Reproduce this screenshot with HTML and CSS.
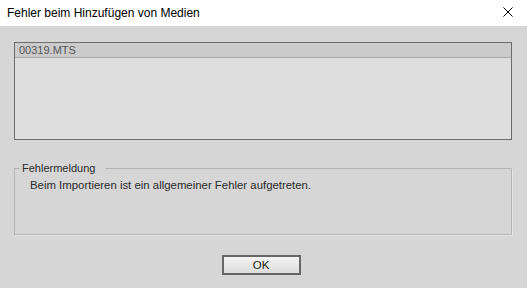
FILE: index.html
```html
<!DOCTYPE html>
<html lang="de">
<head>
  <meta charset="UTF-8">
  <title>Fehler beim Hinzufügen von Medien</title>
  <link rel="stylesheet" href="styles.css">
</head>
<body>
  <div class="titlebar">
    <span class="title">Fehler beim Hinzufügen von Medien</span>
    <svg class="close" width="10" height="10" viewBox="0 0 10 10">
      <path d="M0.5 0.5 L9.5 9.5 M9.5 0.5 L0.5 9.5" stroke="#000" stroke-width="1" fill="none"/>
    </svg>
  </div>
  <div class="content">
    <div class="filelist">
      <div class="filehead">00319.MTS</div>
    </div>
    <fieldset class="group">
      <legend>Fehlermeldung</legend>
      <p class="message">Beim Importieren ist ein allgemeiner Fehler aufgetreten.</p>
    </fieldset>
    <div class="buttons">
      <button class="ok">OK</button>
    </div>
  </div>
</body>
</html>
```
FILE: styles.css
```css
html, body {
  margin: 0;
  height: 100%;
}
body {
  background: #d6d6d6;
  font-family: "Liberation Sans", Arial, sans-serif;
  font-size: 11px;
  color: #333;
}
.titlebar {
  height: 26px;
  background: #fff;
  display: flex;
  align-items: center;
  justify-content: space-between;
  padding: 0 14px 0 7px;
}
.title {
  font-size: 12px;
  color: #000;
  margin-top: -1px;
}
.close {
  margin-top: -3px;
}
.content {
  padding: 16px 15px 0 14px;
}
.filelist {
  height: 96px;
  border: 1px solid #6c6c6c;
  background: #dedede;
}
.filehead {
  height: 14px;
  line-height: 14px;
  background: #cbcbcb;
  border-bottom: 1px solid #a9a9a9;
  padding-left: 4px;
  color: #555;
}
.group {
  margin: 22px 0 0;
  padding: 0 0 0 15px;
  height: 71px;
  border: 1px solid #b5b5b5;
  box-shadow: 1px 1px 0 #e6e6e6;
  min-width: 0;
}
.group legend {
  padding: 0 10px 0 2px;
  margin-left: -10px;
  line-height: 13px;
  color: #2a2a2a;
}
.message {
  margin: 4px 0 0;
  font-size: 11.4px;
  color: #2a2a2a;
}
.buttons {
  display: flex;
  justify-content: center;
  margin-top: 20px;
  padding-right: 4px;
}
.ok {
  width: 79px;
  height: 20px;
  border: 2px solid #666;
  background: linear-gradient(#f4f4f4, #dcdcdc);
  font-family: "Liberation Sans", Arial, sans-serif;
  font-size: 11.5px;
  color: #222;
  padding: 0;
}
```
